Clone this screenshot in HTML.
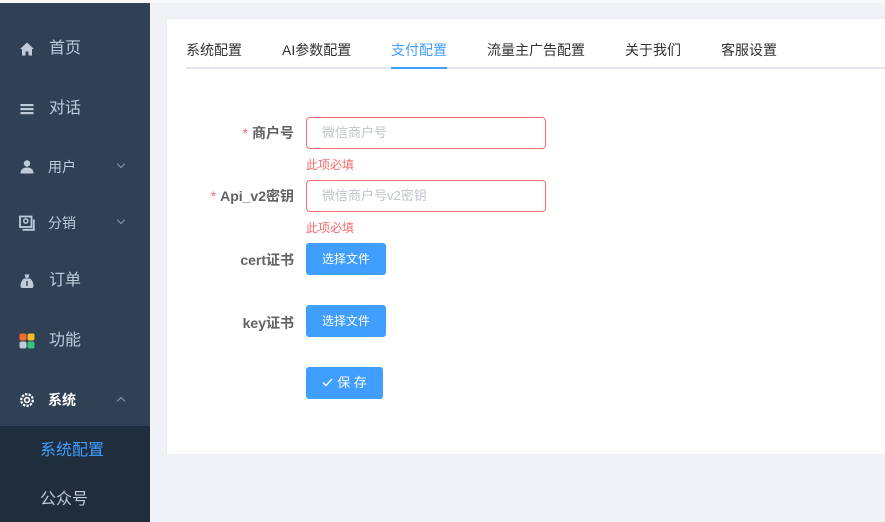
<!DOCTYPE html>
<html><head><meta charset="utf-8"><style>
*{margin:0;padding:0;box-sizing:border-box}
body{width:885px;height:522px;overflow:hidden;background:#f0f2f5;font-family:"Liberation Sans","Noto Sans CJK SC",sans-serif;position:relative}
.top{position:absolute;left:0;top:0;width:885px;height:3px;background:#f7f8fa}
.side{position:absolute;left:0;top:3px;width:150px;height:519px;background:#304156}
.sub{position:absolute;left:0;top:426px;width:150px;height:96px;background:#1f2d3d}
.it{position:absolute;left:0;width:150px;color:#bfcbd9;font-size:16px;line-height:20px}
.it .ic{position:absolute;left:19px;top:2px;width:16px;height:16px}
.it .t{position:absolute;left:49px}
.it.s{font-size:14px}
.it.s .t{left:48px}
.arr{position:absolute;left:118px;top:4px;width:6px;height:6px;border-right:1px solid #8a98a8;border-bottom:1px solid #8a98a8;transform:rotate(45deg)}
.arr.up{transform:rotate(-135deg);top:8px}
.card{position:absolute;left:166px;top:18px;width:730px;height:437px;background:#fff;border:1px solid #ebeef5}
.tabs{position:absolute;left:186px;top:38px;width:699px;height:31px;border-bottom:2px solid #e4e7ed}
.tab{position:absolute;top:2px;font-size:14px;color:#303133}
.tab.a{color:#409eff}
.ul{position:absolute;left:391px;top:67px;width:56px;height:2px;background:#409eff}
.lb{position:absolute;right:591px;font-size:14px;font-weight:bold;color:#606266;text-align:right;white-space:nowrap}
.lb i{color:#f56c6c;font-style:normal;font-weight:normal;margin-right:4px}
.in{position:absolute;left:306px;width:240px;height:32px;border:1px solid #f56c6c;border-radius:4px;font-size:13px;color:#c0c4cc;padding-left:15px;line-height:30px}
.err{position:absolute;left:306px;font-size:12px;color:#f56c6c}
.btn{position:absolute;left:306px;width:80px;height:32px;background:#409eff;border-radius:3px;color:#fff;font-size:12px;text-align:center;line-height:32px}
</style></head><body>
<div class="top"></div>
<div class="side"></div>
<div class="sub"></div>
<div class="it" style="top:39px"><svg class="ic" viewBox="0 0 16 16"><path d="M8 1.5L1 8h2v6.5h3.5v-4h3v4H13V8h2z" fill="#bfcbd9"/></svg><span class="t">首页</span></div>
<div class="it" style="top:99px"><svg class="ic" viewBox="0 0 16 16"><rect x="1.5" y="3" width="13" height="2.2" fill="#bfcbd9"/><rect x="1.5" y="7" width="13" height="2.2" fill="#bfcbd9"/><rect x="1.5" y="11" width="13" height="2.2" fill="#bfcbd9"/></svg><span class="t">对话</span></div>
<div class="it s" style="top:157px"><svg class="ic" viewBox="0 0 16 16"><circle cx="8" cy="4.5" r="3.2" fill="#bfcbd9"/><path d="M1.5 14.5c0-4.5 3-6 6.5-6s6.5 1.5 6.5 6z" fill="#bfcbd9"/></svg><span class="t">用户</span><span class="arr"></span></div>
<div class="it s" style="top:213px"><svg class="ic" viewBox="0 0 16 16"><rect x="1" y="1.5" width="11.5" height="10.5" fill="none" stroke="#bfcbd9" stroke-width="1.8"/><circle cx="6.8" cy="6" r="2.1" fill="none" stroke="#bfcbd9" stroke-width="1.5"/><path d="M3.5 14.8h11.3V4.5" fill="none" stroke="#bfcbd9" stroke-width="1.8"/></svg><span class="t">分销</span><span class="arr"></span></div>
<div class="it" style="top:271px"><svg class="ic" viewBox="0 0 16 16"><path d="M5.5 1.5h5l-1.2 3.5H6.7z" fill="#bfcbd9"/><path d="M5 5.5h6c2.5 2 3.5 5 3.5 7.5 0 1.5-1 2-2 2h-9c-1 0-2-.5-2-2 0-2.5 1-5.5 3.5-7.5z" fill="#bfcbd9"/><rect x="7.3" y="8" width="1.4" height="5" fill="#304156"/></svg><span class="t">订单</span></div>
<div class="it" style="top:331px"><svg class="ic" viewBox="0 0 16 16"><rect x="0.5" y="0.5" width="7" height="7" rx="2" fill="#f56c2c"/><rect x="8.5" y="0.5" width="7" height="7" rx="2" fill="#f7ba2a"/><rect x="0.5" y="8.5" width="7" height="7" rx="2" fill="#bfcbd9"/><rect x="8.5" y="8.5" width="7" height="7" rx="2" fill="#36c47a"/></svg><span class="t">功能</span></div>
<div class="it s" style="top:390px;color:#fff"><svg class="ic" viewBox="0 0 16 16"><circle cx="8" cy="8" r="5.8" fill="none" stroke="#fff" stroke-width="2.2" stroke-dasharray="2.4 1.2"/><circle cx="8" cy="8" r="2.4" fill="none" stroke="#fff" stroke-width="1.6"/></svg><span class="t" style="font-weight:bold">系统</span><span class="arr up"></span></div>
<div class="it" style="top:441px;color:#409eff"><span class="t" style="left:40px">系统配置</span></div>
<div class="it" style="top:490px"><span class="t" style="left:40px">公众号</span></div>
<div class="card"></div>
<div class="tabs"></div>
<div class="tab" style="left:186px;top:40px">系统配置</div>
<div class="tab" style="left:282px;top:40px">AI参数配置</div>
<div class="tab a" style="left:391px;top:40px">支付配置</div>
<div class="tab" style="left:487px;top:40px">流量主广告配置</div>
<div class="tab" style="left:625px;top:40px">关于我们</div>
<div class="tab" style="left:721px;top:40px">客服设置</div>
<div class="ul"></div>
<div class="lb" style="top:123px"><i>*</i>商户号</div>
<div class="in" style="top:117px">微信商户号</div>
<div class="err" style="top:156px">此项必填</div>
<div class="lb" style="top:186px"><i>*</i>Api_v2密钥</div>
<div class="in" style="top:180px">微信商户号v2密钥</div>
<div class="err" style="top:219px">此项必填</div>
<div class="lb" style="top:250px">cert证书</div>
<div class="btn" style="top:243px">选择文件</div>
<div class="lb" style="top:313px">key证书</div>
<div class="btn" style="top:305px">选择文件</div>
<div class="btn" style="top:367px;width:77px;font-size:13px"><svg width="11" height="9" viewBox="0 0 11 9" style="vertical-align:0;margin-right:4px"><path d="M1 4.5l3 3L10 1" fill="none" stroke="#fff" stroke-width="1.3"/></svg>保 存</div>
</body></html>
